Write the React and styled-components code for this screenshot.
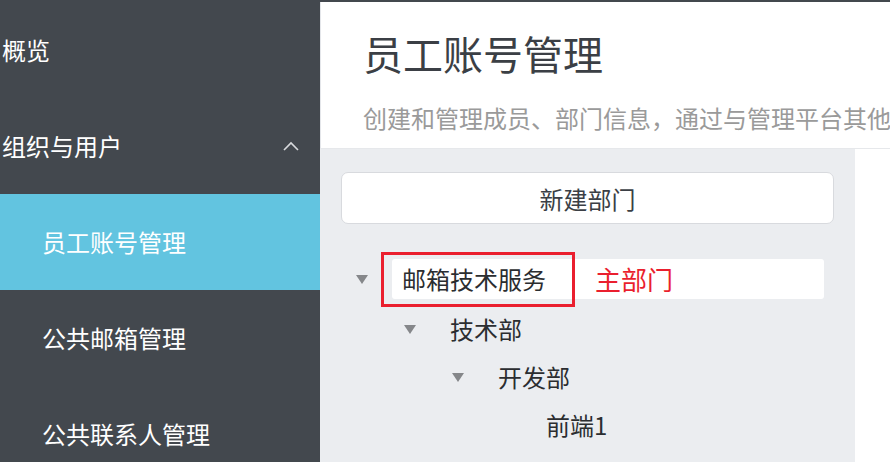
import React from "react";
import styled, { createGlobalStyle } from "styled-components";

const Global = createGlobalStyle`
  html, body { margin: 0; padding: 0; width: 890px; height: 462px; overflow: hidden; }
  body { font-family: "Noto Sans CJK SC", "Noto Sans", sans-serif; background: #ffffff; }
  * { box-sizing: border-box; }
`;

const Page = styled.div`
  display: flex;
  width: 890px;
  height: 462px;
  background: #43484e;
`;

const Sidebar = styled.nav`
  width: 320px;
  flex: none;
  display: flex;
  flex-direction: column;
  padding-top: 2px;
  background: #43484e;
`;

const NavItem = styled.div`
  height: 96px;
  flex: none;
  display: flex;
  align-items: center;
  justify-content: space-between;
  padding: 0 21px 0 ${(p) => (p.$sub ? 42 : 2)}px;
  font-size: 24px;
  line-height: 24px;
  color: #ffffff;
  background: ${(p) => (p.$active ? "#62c4e0" : "transparent")};
`;

const Main = styled.main`
  flex: 1;
  display: flex;
  flex-direction: column;
  margin-top: 2px;
  background: #ffffff;
  min-width: 0;
`;

const Header = styled.header`
  height: 146px;
  flex: none;
  padding: 31px 0 0 42px;
  border-left: 1px solid #e4e6ea;
  overflow: hidden;
`;

const Title = styled.h1`
  margin: 0;
  font-size: 40px;
  line-height: 40px;
  font-weight: 400;
  color: #3b3f45;
`;

const Subtitle = styled.p`
  margin: 33px 0 0;
  font-size: 24px;
  line-height: 24px;
  color: #9a9a9a;
  white-space: nowrap;
`;

const Body = styled.div`
  flex: 1;
  display: flex;
  border-top: 1px solid #e6e8eb;
`;

const TreePanel = styled.section`
  width: 535px;
  flex: none;
  background: #ebedf0;
  padding: 23px 21px 0 21px;
`;

const Aside = styled.div`
  flex: 1;
  background: #ffffff;
`;

const NewButton = styled.button`
  display: block;
  width: 493px;
  height: 52px;
  border: 1px solid #d8dade;
  border-radius: 7px;
  background: #ffffff;
  font-family: inherit;
  font-size: 24px;
  color: #3b3f45;
  cursor: pointer;
`;

const Tree = styled.ul`
  list-style: none;
  margin: 35px 0 0;
  padding: 0;
`;

const Row = styled.li`
  display: flex;
  align-items: center;
  height: ${(p) => (p.$first ? 40 : 48)}px;
  margin-bottom: ${(p) => (p.$first ? 6 : 0)}px;
  padding-left: ${(p) => p.$level * 48}px;
`;

const Toggle = styled.span`
  width: 51px;
  flex: none;
  display: flex;
  align-items: center;
  padding-left: 15px;
`;

const Caret = styled.span`
  width: 0;
  height: 0;
  border-left: 6px solid transparent;
  border-right: 6px solid transparent;
  border-top: 9px solid #85878a;
`;

const Label = styled.span`
  display: flex;
  align-items: center;
  height: 40px;
  padding-left: 10px;
  font-size: 24px;
  line-height: 24px;
  color: #2b2d30;
  background: ${(p) => (p.$selected ? "#ffffff" : "transparent")};
  border-radius: 3px;
  width: ${(p) => (p.$selected ? "432px" : "auto")};
`;

const Marked = styled.span`
  position: relative;
  &::before {
    content: "";
    position: absolute;
    left: -21px;
    top: -15px;
    width: 188px;
    height: 49px;
    border: 3px solid #ea1f2e;
  }
`;

const Note = styled.span`
  margin-left: 49px;
  font-size: 26px;
  color: #ea1f2e;
`;

const tree = [
  { label: "邮箱技术服务", level: 0, caret: true, selected: true },
  { label: "技术部", level: 1, caret: true },
  { label: "开发部", level: 2, caret: true },
  { label: "前端1", level: 3, caret: false },
];

export default function App() {
  return (
    <>
      <Global />
      <Page>
        <Sidebar>
          <NavItem>概览</NavItem>
          <NavItem>
            组织与用户
            <svg width="16" height="10" viewBox="0 0 16 10">
              <polyline points="1,9 8,2 15,9" fill="none" stroke="#d8dadd" strokeWidth="1.6" />
            </svg>
          </NavItem>
          <NavItem $sub $active>员工账号管理</NavItem>
          <NavItem $sub>公共邮箱管理</NavItem>
          <NavItem $sub>公共联系人管理</NavItem>
        </Sidebar>
        <Main>
          <Header>
            <Title>员工账号管理</Title>
            <Subtitle>创建和管理成员、部门信息，通过与管理平台其他</Subtitle>
          </Header>
          <Body>
            <TreePanel>
              <NewButton>新建部门</NewButton>
              <Tree>
                {tree.map((n, i) => (
                  <Row key={i} $level={n.level} $first={i === 0}>
                    <Toggle>{n.caret && <Caret />}</Toggle>
                    <Label $selected={n.selected}>
                      {n.selected ? (
                        <>
                          <Marked>{n.label}</Marked>
                          <Note>主部门</Note>
                        </>
                      ) : (
                        n.label
                      )}
                    </Label>
                  </Row>
                ))}
              </Tree>
            </TreePanel>
            <Aside />
          </Body>
        </Main>
      </Page>
    </>
  );
}
